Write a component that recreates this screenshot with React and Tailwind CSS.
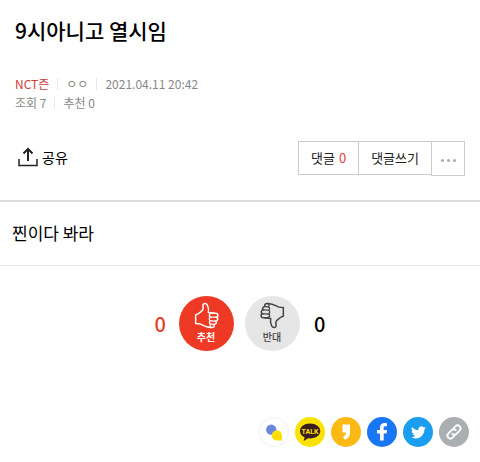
import React, { useState } from 'react'

const HandIcon = ({ className }) => (
    <svg viewBox="0 0 75 80" className={className} fill="none" stroke="currentColor" strokeWidth="4.5" strokeLinecap="round" strokeLinejoin="round">
        <path d="M5 38 C13 37 15 33 20 29 C28 24 29 20 27 12 C25 3 36 1 40 9 C44 16 45 21 43 31 C50 33 58 32 65 33 C74 34 74 44 66 45 C74 47 72 57 64 57 C70 59 67 67 60 67 C63 73 59 76 52 76 C37 76 30 71 20 66 C15 64 10 64 5 64 Z" />
        <path d="M60 33 C53 32 48 34 46 38 C45 43 49 45 54 45 L66 45 M49 45 C44 48 45 56 52 56 L64 57 M49 56 C44 60 46 66 52 66 L60 67 M50 66 C46 69 48 75 52 76" strokeWidth="4" />
    </svg>
)

const ShareIcon = () => (
    <svg viewBox="0 0 20 20" className="w-5 h-5" fill="none" stroke="#222" strokeWidth="2">
        <path d="M1 12V18.5H19V12" strokeWidth="1.5" />
        <path d="M10 14V2M5.5 6.5L10 2L14.5 6.5" />
    </svg>
)

const BandIcon = () => (
    <svg viewBox="0 0 30 30" className="w-full h-full">
        <circle cx="12" cy="12.5" r="5.5" fill="#6d86dd" />
        <path d="M18 13a5.5 5.5 0 0 1 5.5 5.5V24H18a5.5 5.5 0 0 1 0-11z" fill="#fbdf07" />
    </svg>
)

const TalkIcon = () => (
    <svg viewBox="0 0 30 30" className="w-full h-full">
        <path d="M15 6.5C9.2 6.5 5 9.8 5 14c0 2.800 1.800 5 4.600 6.300L8.700 24l4.400-2.700c.6.1 1.200.1 1.900.1 5.800 0 10.300-3.200 10.300-7.400S20.800 6.500 15 6.500z" fill="#3b1e1e" />
        <text x="15" y="17" textAnchor="middle" fill="#fbe000" fontSize="7" fontWeight="700" fontFamily="Roboto, sans-serif">TALK</text>
    </svg>
)

const StoryIcon = () => (
    <svg viewBox="0 0 30 30" className="w-full h-full">
        <path d="M11.500 7.500H19V15C19 19.500 17 22 13.500 22.500L12 19.500C14 19 15 17.500 15 15.500H11.500Z" fill="#fff" />
    </svg>
)

const FacebookIcon = () => (
    <svg viewBox="0 0 30 30" className="w-full h-full">
        <path d="M13 23.500V16.500H10V13H13V10.500C13 7.500 14.800 6 17.500 6L20 6.200V9.300H18.200C17 9.300 16.700 10 16.700 11V13H20L19.500 16.500H16.700V23.500Z" fill="#fff" />
    </svg>
)

const TwitterIcon = () => (
    <svg viewBox="0 0 30 30" className="w-full h-full">
        <g transform="translate(8 8) scale(.62)">
            <path fill="#fff" d="M23.953 4.570a10 10 0 0 1-2.825.775 4.958 4.958 0 0 0 2.163-2.723c-.951.555-2.005.959-3.127 1.184a4.920 4.920 0 0 0-8.384 4.482C7.690 8.095 4.067 6.130 1.640 3.162a4.822 4.822 0 0 0-.666 2.475c0 1.710.870 3.213 2.188 4.096a4.904 4.904 0 0 1-2.228-.616v.060a4.923 4.923 0 0 0 3.946 4.827 4.996 4.996 0 0 1-2.212.085 4.936 4.936 0 0 0 4.604 3.417 9.867 9.867 0 0 1-6.102 2.105c-.39 0-.779-.023-1.170-.067a13.995 13.995 0 0 0 7.557 2.209c9.053 0 13.998-7.496 13.998-13.985 0-.21 0-.42-.015-.63A9.935 9.935 0 0 0 24 4.590z" />
        </g>
    </svg>
)

const LinkIcon = () => (
    <svg viewBox="0 0 30 30" className="w-full h-full">
        <g transform="rotate(-45 15 15)" fill="none" stroke="#fff" strokeWidth="1.8" strokeLinecap="round">
            <path d="M12.500 18H10A3 3 0 0 1 10 12H14.500A3 3 0 0 1 17.500 15" />
            <path d="M17.500 12H20A3 3 0 0 1 20 18H15.500A3 3 0 0 1 12.500 15" />
        </g>
    </svg>
)

const shares = [
    { name: '밴드', bg: 'bg-white border border-[#f0f0f8]', Icon: BandIcon },
    { name: '카카오톡', bg: 'bg-[#fae100]', Icon: TalkIcon },
    { name: '카카오스토리', bg: 'bg-[#fdb913]', Icon: StoryIcon },
    { name: '페이스북', bg: 'bg-[#1977f3]', Icon: FacebookIcon },
    { name: '트위터', bg: 'bg-[#1b9df0]', Icon: TwitterIcon },
    { name: '링크 복사', bg: 'bg-[#aaafb1]', Icon: LinkIcon },
]

const Divider = () => <span className="w-px h-3 bg-[#e8e8e8]" />

const App = () => {
    const [up, setUp] = useState(0)
    const [down, setDown] = useState(0)

    return (
        <main className="bg-white text-black font-['Noto_Sans_CJK_KR',sans-serif]">
            <header className="px-[15px] pt-3.5">
                <h1 className="text-[21px] leading-8 font-medium">9시아니고 열시임</h1>
                <div className="mt-7 text-xs leading-[19px] text-[#888]">
                    <div className="flex items-center gap-2">
                        <span className="text-[#cf3b3b]">NCT즌</span>
                        <Divider />
                        <span>ㅇㅇ</span>
                        <Divider />
                        <time>2021.04.11 20:42</time>
                    </div>
                    <div className="flex items-center gap-2">
                        <span>조회 7</span>
                        <Divider />
                        <span>추천 0</span>
                    </div>
                </div>
            </header>

            <div className="mt-[29px] flex items-start justify-between pl-[18px] pr-[15px] pb-6">
                <button className="flex items-center gap-1 pt-1.5 text-sm">
                    <ShareIcon />
                    공유
                </button>
                {/* comment buttons */}
                <div className="flex items-start text-[13px] text-[#222]">
                    <a href="#comments" className="h-[34px] px-3 flex items-center gap-1 border border-[#ccc]">
                        댓글 <span className="text-[#dd4040]">0</span>
                    </a>
                    <a href="#write" className="h-[34px] px-3 flex items-center border-y border-[#ccc]">댓글쓰기</a>
                    <button aria-label="더보기" className="w-[34px] h-[35px] flex items-center justify-center gap-[3px] border border-[#ccc] pt-1">
                        <span className="w-[3px] h-[3px] rounded-full bg-[#aaa]" />
                        <span className="w-[3px] h-[3px] rounded-full bg-[#aaa]" />
                        <span className="w-[3px] h-[3px] rounded-full bg-[#aaa]" />
                    </button>
                </div>
            </div>

            <p className="border-t-2 border-[#ddd] px-3 pt-[19px] pb-5 text-[17px] leading-6">찐이다 봐라</p>

            <section className="border-t border-[#e6e6e6] pt-[30px] flex items-center justify-center">
                <span className="w-6 text-xl font-medium text-[#e63c28]">{up}</span>
                <button onClick={() => setUp(up + 1)} className="w-[55px] h-[55px] rounded-full bg-[#ee3a24] text-white flex flex-col items-center pt-1.5">
                    <HandIcon className="w-[25px] h-[27px]" />
                    <span className="text-[10px] leading-4 font-bold">추천</span>
                </button>
                <button onClick={() => setDown(down + 1)} className="ml-[11px] w-[55px] h-[55px] rounded-full bg-[#e6e6e6] text-[#444] flex flex-col items-center pt-1.5">
                    <HandIcon className="w-[25px] h-[27px] rotate-180" />
                    <span className="text-[10px] leading-4 font-medium">반대</span>
                </button>
                <span className="w-[26px] text-xl font-medium text-right">{down}</span>
            </section>

            <footer className="mt-[66px] pr-[11px] pb-4 flex justify-end gap-1.5">
                {shares.map(({ name, bg, Icon }) => (
                    <button key={name} aria-label={name} className={`w-[30px] h-[30px] rounded-full ${bg}`}>
                        <Icon />
                    </button>
                ))}
            </footer>
        </main>
    )
}

export default App
